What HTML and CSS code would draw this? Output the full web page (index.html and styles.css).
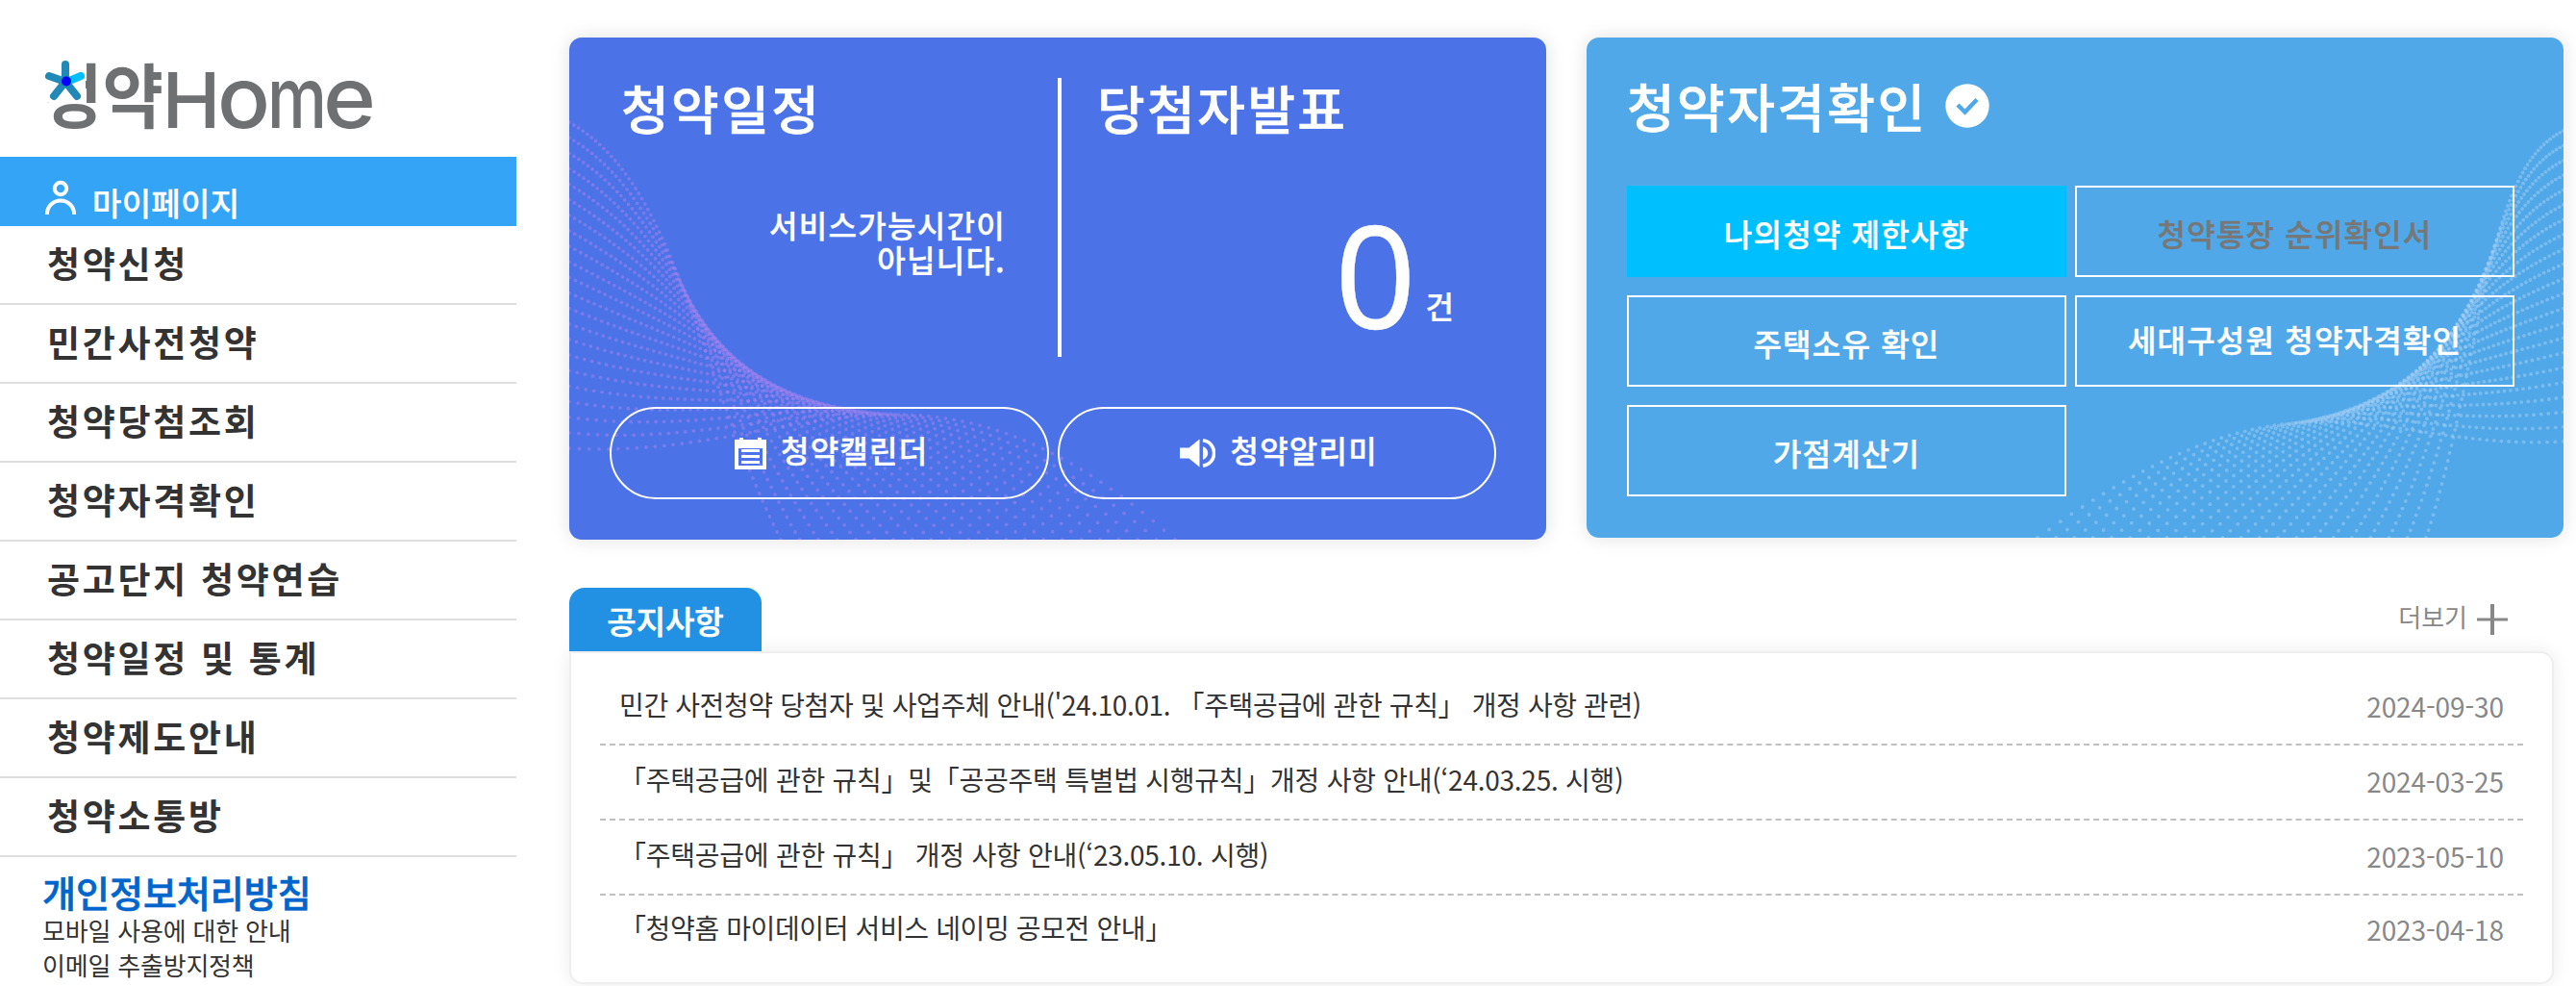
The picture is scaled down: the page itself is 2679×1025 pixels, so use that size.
FILE: index.html
```html
<!DOCTYPE html>
<html lang="ko">

<head>
    <meta charset="UTF-8">
    <meta name="viewport" content="width=device-width, initial-scale=1.0">
    <title>청약Home</title>
    <link rel="stylesheet" href="styles.css">
</head>

<body>
    <aside class="sidebar">
        <h1 class="logo">
            <svg width="345" height="76" viewBox="0 0 345 76">
                <defs>
                    <mask id="logo-mask">
                        <rect width="345" height="76" fill="#fff" />
                        <rect width="42" height="43" fill="#000" />
                    </mask>
                </defs>
                <g mask="url(#logo-mask)">
                    <text class="logo-ko" x="-4" y="63.500" textLength="127" lengthAdjust="spacingAndGlyphs">청약</text>
                </g>
                <text class="logo-cap" x="121.500" y="70" textLength="61" lengthAdjust="spacingAndGlyphs">H</text>
                <text class="logo-en" x="179" y="70" textLength="55" lengthAdjust="spacingAndGlyphs">o</text>
                <text class="logo-en" x="231" y="70" textLength="62" lengthAdjust="spacingAndGlyphs">m</text>
                <text class="logo-en" x="289" y="70" textLength="55" lengthAdjust="spacingAndGlyphs">e</text>
                <g stroke-width="8" stroke-linecap="round" fill="none">
                    <path d="M21 22V4M21 22L4 16M21 22L9 37M21 22L33 37" stroke="#2089b8" />
                    <path d="M25 21L37 16" stroke="#00bfff" />
                </g>
                <circle cx="22" cy="21.500" r="5" fill="#0000ff" />
            </svg>
        </h1>
        <a class="mypage">
            <svg width="32" height="36" viewBox="0 0 32 36" fill="none" stroke="#fff" stroke-width="4">
                <circle cx="16" cy="9" r="6.200" />
                <path d="M2 36V35A14 13.500 0 0 1 30 35V36" />
            </svg>
            <span>마이페이지</span>
        </a>
        <ul class="menu">
            <li>청약신청</li>
            <li>민간사전청약</li>
            <li>청약당첨조회</li>
            <li>청약자격확인</li>
            <li>공고단지 청약연습</li>
            <li>청약일정 및 통계</li>
            <li>청약제도안내</li>
            <li>청약소통방</li>
        </ul>
        <div class="policy">
            <strong>개인정보처리방침</strong>
            <p>모바일 사용에 대한 안내</p>
            <p>이메일 추출방지정책</p>
        </div>
    </aside>

    <main>
        <div class="cards">
            <!-- Schedule / winners -->
            <section class="card card-schedule">
                <svg class="wave" id="wave-schedule" viewBox="0 0 1016 522" fill="#a783f0"></svg>
                <div class="schedule-top">
                    <div class="schedule">
                        <h2>청약일정</h2>
                        <p class="schedule-msg">서비스가능시간이<br>아닙니다.</p>
                    </div>
                    <div class="winner">
                        <h2>당첨자발표</h2>
                        <p class="count"><b>0</b><span>건</span></p>
                    </div>
                </div>
                <div class="pills">
                    <a class="pill">
                        <svg width="33" height="33" viewBox="0 0 33 33" fill="#fff">
                            <path fill-rule="evenodd" d="M0 2H5V0H9V2H24V0H28V2H33V33H0ZM4 11V29H29V11Z" />
                            <path d="M7 12H26V15H7ZM7 18H26V21H7ZM7 24H26V27H7Z" />
                        </svg>
                        <span>청약캘린더</span>
                    </a>
                    <a class="pill">
                        <svg width="37" height="30" viewBox="0 0 37 30">
                            <path d="M0 9.500H9.500L20.500 0.500V29.500L9.500 20.500H0Z" fill="#fff" />
                            <path d="M24 8C31 11 31 19 24 22Z" fill="#fff" />
                            <path d="M24 1.800C39.500 4 39.500 26 24 28.200" fill="none" stroke="#fff" stroke-width="3.600" />
                        </svg>
                        <span>청약알리미</span>
                    </a>
                </div>
            </section>

            <!-- Eligibility -->
            <section class="card card-check">
                <svg class="wave" id="wave-check" viewBox="0 0 1016 520" fill="#a5cff5"></svg>
                <h2>청약자격확인
                    <svg width="46" height="46" viewBox="0 0 46 46">
                        <circle cx="23" cy="23" r="22.700" fill="#fff" />
                        <path d="M13 22L20.500 29.500L33 16.500" fill="none" stroke="#51a8e8" stroke-width="4.500" />
                    </svg>
                </h2>
                <div class="check-grid">
                    <a class="active">나의청약 제한사항</a>
                    <a class="disabled">청약통장 순위확인서</a>
                    <a>주택소유 확인</a>
                    <a class="raised">세대구성원 청약자격확인</a>
                    <a>가점계산기</a>
                </div>
            </section>
        </div>

        <!-- Notices -->
        <section class="notice">
            <div class="notice-head">
                <h3>공지사항</h3>
                <a class="more"><span>더보기</span>
                    <svg width="32" height="32" viewBox="0 0 32 32" stroke="#888" fill="none">
                        <path d="M0 16H32" stroke-width="3" />
                        <path d="M16 0V32" stroke-width="4" />
                    </svg>
                </a>
            </div>
            <ul class="notice-list">
                <li><span>민간 사전청약 당첨자 및 사업주체 안내('24.10.01. 「주택공급에 관한 규칙」 개정 사항 관련)</span><time>2024-09-30</time></li>
                <li><span>「주택공급에 관한 규칙」및「공공주택 특별법 시행규칙」개정 사항 안내(‘24.03.25. 시행)</span><time>2024-03-25</time></li>
                <li><span>「주택공급에 관한 규칙」 개정 사항 안내(‘23.05.10. 시행)</span><time>2023-05-10</time></li>
                <li><span>「청약홈 마이데이터 서비스 네이밍 공모전 안내」</span><time>2023-04-18</time></li>
            </ul>
        </section>
    </main>

    <script src="script.js"></script>
</body>

</html>
```

FILE: styles.css
```css
/* Reset Styles */
* {
    margin: 0;
    padding: 0;
    box-sizing: border-box;
}

body {
    display: grid;
    grid-template-columns: 537px 1fr;
    height: 1025px;
    overflow: hidden;
    background: #fff;
    color: #333;
    font-family: "Noto Sans CJK KR", sans-serif;
}

ul {
    list-style: none;
}

svg {
    flex: none;
}

/* Sidebar */
.logo {
    height: 163px;
    padding: 63px 0 0 47px;
    line-height: 0;
}

.logo svg {
    overflow: visible;
}

.logo text {
    fill: #6f7072;
}

.logo-ko {
    font-size: 73px;
    font-weight: 700;
}

.logo-cap {
    font-family: Inter, sans-serif;
    font-size: 80px;
    font-weight: 500;
}

.logo-en {
    font-family: Inter, sans-serif;
    font-size: 88px;
    font-weight: 500;
}

.mypage {
    display: flex;
    gap: 17px;
    height: 72px;
    padding: 24px 0 0 47px;
    background: #33a4f6;
    color: #fff;
    font-size: 33px;
    font-weight: 500;
    letter-spacing: 0.300px;
    line-height: 46px;
    -webkit-text-stroke: 0.3px;
}

.menu li {
    display: flex;
    align-items: center;
    height: 82px;
    padding: 0 0 4px 49px;
    border-bottom: 2px solid #ddd;
    font-size: 37px;
    font-weight: 700;
    letter-spacing: 2.700px;
}

.policy {
    padding: 13px 0 0 44px;
    font-size: 26px;
    letter-spacing: -0.200px;
    line-height: 36px;
}

.policy strong {
    display: block;
    color: #0066cc;
    font-size: 38px;
    font-weight: 500;
    letter-spacing: 0;
    line-height: 45px;
    -webkit-text-stroke: 0.7px;
}

/* Cards */
main {
    padding: 39px 0 0 55px;
}

.cards {
    display: flex;
    align-items: flex-start;
    gap: 42px;
}

.card {
    position: relative;
    width: 1016px;
    border-radius: 13px;
    box-shadow: 0 0 20px rgba(0, 0, 0, 0.12);
    color: #fff;
    -webkit-text-stroke: 0.4px;
}

.card h2 {
    font-size: 54px;
    font-weight: 500;
    letter-spacing: 2.400px;
    line-height: 62px;
    -webkit-text-stroke: 0.6px;
}

.wave {
    position: absolute;
    inset: 0;
    border-radius: 13px;
}

.card-schedule {
    height: 522px;
    padding: 42px 52px 0 42px;
    background: #4b72e7;
}

.schedule-top {
    position: relative;
    display: flex;
    height: 290px;
}

.schedule {
    width: 470px;
    padding: 0 54px 0 12px;
    border-right: 4px solid #fff;
}

.winner {
    flex: 1;
    padding: 0 44px 0 37px;
}

.schedule-msg {
    margin-top: 72px;
    font-size: 32px;
    font-weight: 500;
    letter-spacing: 1.300px;
    line-height: 36px;
    text-align: right;
}

.count {
    display: flex;
    justify-content: flex-end;
    align-items: flex-end;
    gap: 10px;
    margin-top: 87px;
    font-size: 32px;
    font-weight: 500;
}

.count b {
    font-family: "Noto Sans", sans-serif;
    font-size: 148px;
    font-weight: 400;
    line-height: 110px;
}

.count span {
    margin-bottom: 3px;
    line-height: 40px;
}

.pills {
    position: relative;
    display: flex;
    gap: 9px;
    margin-top: 52px;
}

.pill {
    display: flex;
    justify-content: center;
    align-items: center;
    gap: 15px;
    width: 457px;
    height: 96px;
    padding-left: 5px;
    border: 2px solid #fff;
    border-radius: 48px;
    font-size: 32px;
    font-weight: 500;
    letter-spacing: 1.300px;
}

.pill span {
    padding-bottom: 8px;
}

.card-check {
    height: 520px;
    padding: 40px 51px 0 42px;
    background: #51a8e8;
}

.card-check h2 {
    position: relative;
    display: flex;
    align-items: center;
    gap: 19px;
}

.check-grid {
    position: relative;
    display: grid;
    grid-template-columns: 457px 457px;
    gap: 19px 9px;
    margin-top: 52px;
}

.check-grid a {
    display: flex;
    justify-content: center;
    align-items: center;
    height: 95px;
    padding-top: 3px;
    border: 2px solid #fff;
    font-size: 32px;
    font-weight: 500;
    letter-spacing: 1.200px;
}

.check-grid .active {
    border-color: #00bfff;
    background: #00bfff;
}

.check-grid .disabled {
    color: #777;
}

.check-grid .raised {
    padding: 0 0 6px;
}

/* Notices */
.notice {
    width: 2064px;
    margin-top: 50px;
}

.notice-head {
    display: flex;
    justify-content: space-between;
    height: 66px;
}

.notice-head h3 {
    width: 200px;
    border-radius: 16px 16px 0 0;
    background: #2391e3;
    color: #fff;
    font-size: 33px;
    font-weight: 500;
    line-height: 68px;
    text-align: center;
    -webkit-text-stroke: 0.6px;
}

.more {
    display: flex;
    align-items: center;
    gap: 10px;
    padding-right: 48px;
    color: #888;
    font-size: 26px;
}

.more span {
    padding-bottom: 7px;
}

.notice-list {
    height: 346px;
    padding: 18px 30px 0 30px;
    border: 2px solid #eee;
    border-radius: 0 14px 14px 14px;
    background: #fff;
    box-shadow: 0 0 20px rgba(0, 0, 0, 0.08);
}

.notice-list li {
    display: flex;
    justify-content: space-between;
    align-items: center;
    height: 78px;
    padding: 0 20px;
    border-bottom: 2px dashed #c0c0c0;
    font-size: 28px;
}

.notice-list li:last-child {
    height: 72px;
    border-bottom: none;
}

.notice-list span {
    padding-bottom: 6px;
    letter-spacing: -0.250px;
}

.notice-list li:first-child span,
.notice-list li:last-child span {
    letter-spacing: -0.380px;
}

.notice-list time {
    padding-bottom: 3px;
    color: #888;
    letter-spacing: -0.100px;
}
```

FILE: script.js
```js
// Dotted wave: a family of bezier lines blended from `first` to `last`,
// each one an array of four [x, y] control points
function drawWave(id, first, last, bend) {
    const lines = 22;
    const dots = 68;
    let html = '';

    for (let i = 0; i < lines; i++) {
        const s = i / (lines - 1);
        const bulge = 4 * s * (1 - s);
        const p = first.map((pt, k) => pt.map((v, axis) => {
            const value = v + (last[k][axis] - v) * s;
            return k === 1 || k === 2 ? value + bend[axis] * bulge : value;
        }));

        for (let j = 0; j <= dots; j++) {
            const t = j / dots;
            const u = 1 - t;
            const [x, y] = [0, 1].map(a =>
                u * u * u * p[0][a] + 3 * u * u * t * p[1][a] + 3 * u * t * t * p[2][a] + t * t * t * p[3][a]);
            html += `<circle cx="${x.toFixed(1)}" cy="${y.toFixed(1)}" r="1.9" opacity="0.5"/>`;
        }
    }

    document.getElementById(id).innerHTML = html;
}

drawWave('wave-schedule',
    [[0, 88], [112, 151], [130, 341], [220, 522]],
    [[0, 427], [238, 441], [368, 291], [630, 522]],
    [-26, 30]);

drawWave('wave-check',
    [[1016, 97], [932, 136], [932, 341], [873, 520]],
    [[1016, 420], [820, 431], [745, 321], [469, 520]],
    [12, 25]);
```
